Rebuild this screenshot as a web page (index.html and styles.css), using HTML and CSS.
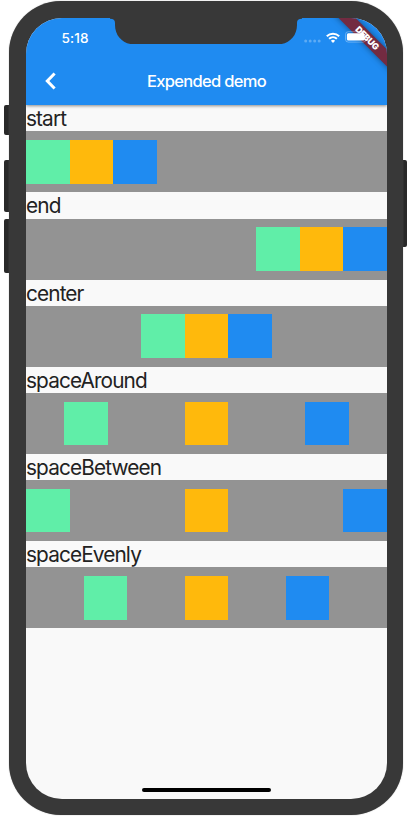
FILE: index.html
```
<!DOCTYPE html>
<html lang="en">
<head>
<meta charset="utf-8">
<title>Expended demo</title>
<link rel="stylesheet" href="styles.css">
</head>
<body>
<div class="phone">
  <i class="key key-mute"></i>
  <i class="key key-up"></i>
  <i class="key key-down"></i>
  <i class="key key-power"></i>
  <div class="screen">
    <header class="top"></header>
    <div class="head">
      <div class="status">
        <span class="time">5:18</span>
        <svg class="dots" viewBox="0 0 18 4" width="18" height="4" fill="#fff" fill-opacity=".28"><circle cx="1.700" cy="2" r="1.500"/><circle cx="6.200" cy="2" r="1.500"/><circle cx="10.700" cy="2" r="1.500"/><circle cx="15.200" cy="2" r="1.500"/></svg>
        <svg class="wifi" viewBox="0 0 14 11" width="14" height="11">
          <path d="M.8 4.200a9 9 0 0 1 12.400 0M3.100 6.700a5.700 5.700 0 0 1 7.800 0" fill="none" stroke="#fff" stroke-width="2"/>
          <path d="M7 10.900 4.900 8.700a3 3 0 0 1 4.200 0z" fill="#fff"/>
        </svg>
        <svg class="battery" viewBox="0 0 22 12" width="22" height="12"><rect x=".5" y=".7" width="20.500" height="10.400" rx="2.800" fill="none" stroke="#fff" stroke-opacity=".4" stroke-width=".8"/><rect x="1.900" y="2.200" width="17.600" height="7.400" rx="1.500" fill="#fff"/></svg>
      </div>
      <div class="bar">
        <svg class="back" viewBox="0 0 12 18" width="12" height="18"><path d="M9.600 1.500 2.300 9l7.300 7.500" fill="none" stroke="#fff" stroke-width="3"/></svg>
        <h1>Expended demo</h1>
      </div>
    </div>
    <main>
      <p>start</p>
      <div class="row start"><i class="g"></i><i class="y"></i><i class="b"></i></div>
      <p>end</p>
      <div class="row end"><i class="g"></i><i class="y"></i><i class="b"></i></div>
      <p>center</p>
      <div class="row center"><i class="g"></i><i class="y"></i><i class="b"></i></div>
      <p>spaceAround</p>
      <div class="row around"><i class="g"></i><i class="y"></i><i class="b"></i></div>
      <p>spaceBetween</p>
      <div class="row between"><i class="g"></i><i class="y"></i><i class="b"></i></div>
      <p>spaceEvenly</p>
      <div class="row evenly"><i class="g"></i><i class="y"></i><i class="b"></i></div>
    </main>
    <div class="banner">DEBUG</div>
    <div class="home"></div>
  </div>
  <svg class="notch" viewBox="0 0 192 27" width="192" height="27"><path d="M0 0H192V1.700C188.500 1.700 187 3 187 6V8C187 19 179 27.300 168 27.300H24C13 27.300 5 19 5 8V6C5 3 3.500 1.700 0 1.700z" fill="#383838"/></svg>
</div>
</body>
</html>
```
FILE: styles.css
```
* { box-sizing: border-box; }
body {
  margin: 0;
  width: 412px;
  height: 817px;
  overflow: hidden;
  background: #fff;
  font-family: Inter, "Liberation Sans", sans-serif;
}
.phone {
  position: relative;
  width: 394px;
  height: 814px;
  margin: 1.300px 0 0 9px;
  padding: 16.700px 16px 16px 17px;
  border-radius: 52px;
  background: #383838;
  box-shadow: 0 0 1px #777;
}
.key {
  position: absolute;
  z-index: -1;
  left: -5px;
  width: 8px;
  border-radius: 2px;
  background: #292929;
}
.key-mute { top: 104px; height: 30px; }
.key-up { top: 158.500px; height: 52px; }
.key-down { top: 218px; height: 53.500px; }
.key-power { top: 158.500px; height: 87px; left: auto; right: -4px; }
.screen {
  display: grid;
  grid-template-rows: 87.200px 1fr;
  position: relative;
  height: 781px;
  overflow: hidden;
  border-radius: 36px;
  background: #f9f9f9;
}
.top, .head { grid-area: 1 / 1; }
.top {
  background: #1f8bf1;
  box-shadow: 0 1px 3px rgba(0, 0, 0, .45);
}
.head { z-index: 3; color: #fff; }
main { grid-area: 2 / 1; color: #222; }
.status {
  display: flex;
  align-items: center;
  height: 39px;
  padding-left: 35.500px;
}
.time {
  width: 242.500px;
  padding-top: 1px;
  font-size: 13.600px;
  font-weight: 500;
  letter-spacing: .1px;
}
.dots { margin: 7px 3.500px 0 0; }
.wifi { margin-right: 5.200px; }
.battery { flex: none; }
.bar {
  display: grid;
  grid-template-columns: 50px 1fr 50px;
  align-items: center;
  height: 48px;
}
.back { margin-left: 19px; }
h1 {
  margin: 0;
  text-align: center;
  font-size: 16.500px;
  font-weight: 500;
  letter-spacing: -.7px;
  white-space: nowrap;
}
p {
  height: 26.200px;
  margin: 0;
  font-size: 20.800px;
  line-height: 27px;
  letter-spacing: -.88px;
}
.row {
  display: flex;
  align-items: center;
  height: 61px;
  background: #939393;
}
.row i { width: 43.600px; height: 43.600px; }
.g { background: #60eea8; }
.y { background: #ffb90c; }
.b { background: #1f8bf1; }
.end { justify-content: flex-end; }
.center { justify-content: center; }
.around { justify-content: space-around; }
.between { justify-content: space-between; }
.evenly { justify-content: space-evenly; }
.banner {
  position: absolute;
  z-index: 2;
  left: 281.200px;
  top: 14.200px;
  width: 120px;
  height: 12.400px;
  transform: rotate(45deg);
  background: #732b41;
  box-shadow: 0 0 6px rgba(0, 0, 0, .45);
  color: #fff;
  font-size: 8.800px;
  font-weight: 900;
  line-height: 12.400px;
  letter-spacing: -.3px;
  text-align: center;
}
.home {
  position: absolute;
  left: 116px;
  bottom: 6.500px;
  width: 129px;
  height: 4.600px;
  border-radius: 3px;
  background: #000;
}
.notch { position: absolute; left: 101px; top: 15.700px; }
```
